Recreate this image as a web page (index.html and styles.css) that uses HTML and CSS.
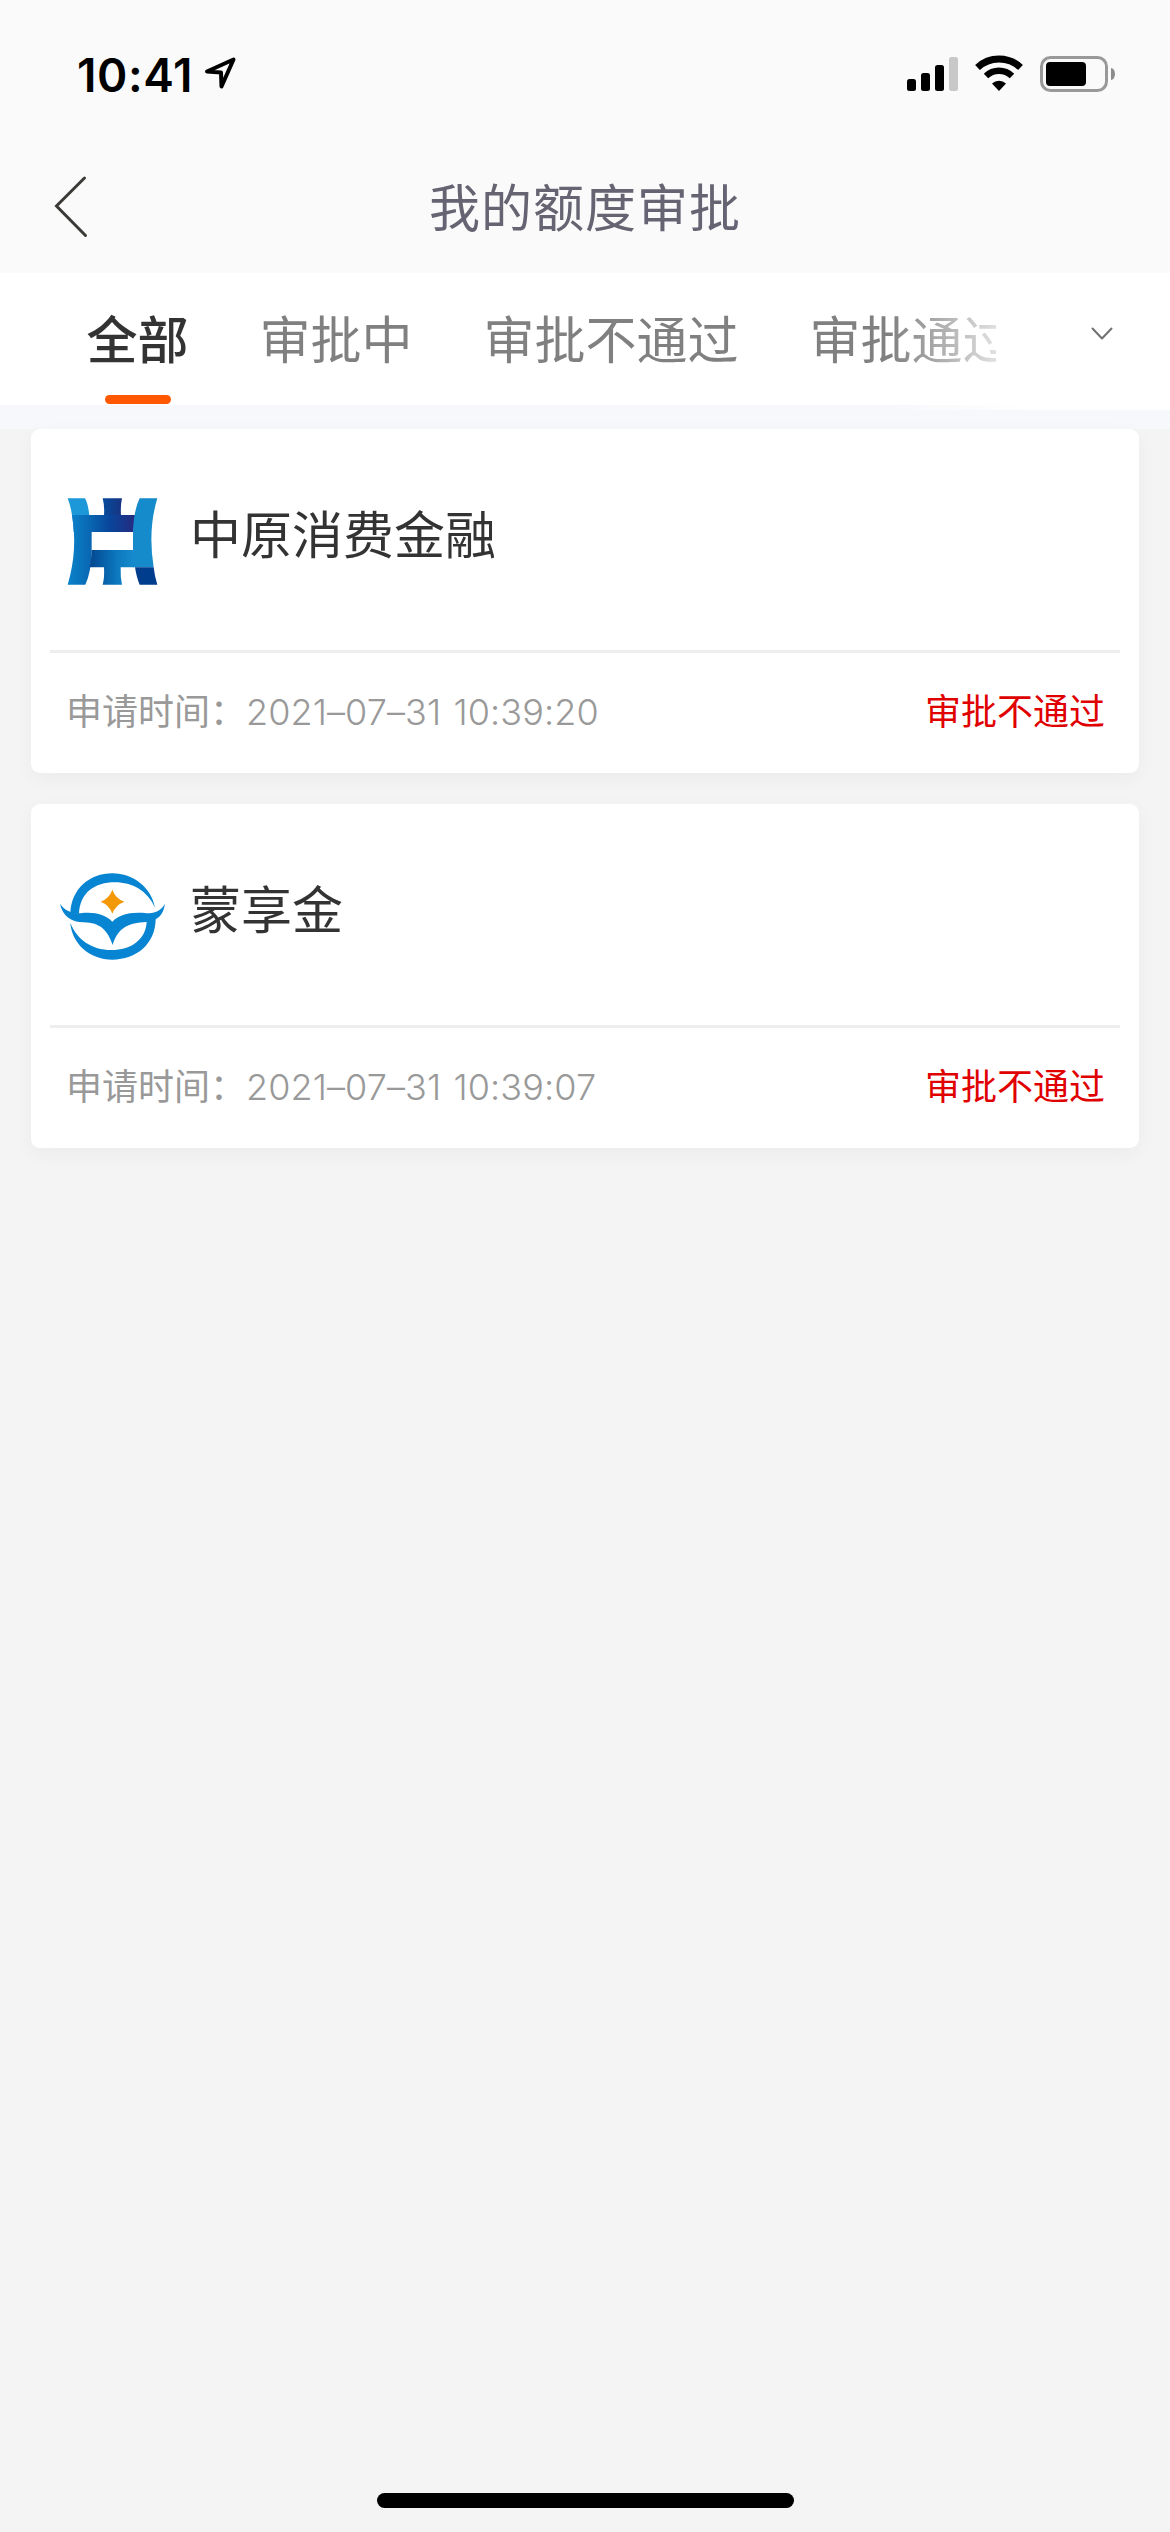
FILE: index.html
```html
<!DOCTYPE html>
<html lang="zh-CN">
<head>
  <meta charset="UTF-8" />
  <meta name="viewport" content="width=device-width, initial-scale=1.0"/>
  <title>我的额度审批</title>
  <link rel="stylesheet" href="styles.css">
</head>
<body>
  <header class="header">
    <div class="status-bar">
      <span class="time">10:41</span>
      <svg class="location" width="34" height="36" viewBox="0 0 34 36">
        <path d="M4 16.5 L30.5 4.500 L18.500 31.500 L18 17.500 Z" fill="none" stroke="#000" stroke-width="4" stroke-linejoin="round"/>
      </svg>
      <svg class="signals" width="210" height="40" viewBox="0 0 210 40">
        <rect x="7" y="25" width="9" height="12" rx="2.500"/>
        <rect x="21" y="19" width="9" height="18" rx="2.500"/>
        <rect x="35" y="11" width="9" height="26" rx="2.500"/>
        <rect x="49" y="3" width="9" height="34" rx="2.500" fill="#c8c8c8"/>
        <path d="M77.500 13.500 A31.500 31.500 0 0 1 120.500 13.500" fill="none" stroke="#000" stroke-width="7"/>
        <path d="M86 22 A19 19 0 0 1 112 22" fill="none" stroke="#000" stroke-width="6.500"/>
        <path d="M92 29.500 A10.500 10.500 0 0 1 106 29.500 L99 37 Z"/>
        <rect x="141.500" y="3.500" width="65" height="33" rx="9" fill="none" stroke="#999" stroke-width="3"/>
        <rect x="146" y="8" width="40" height="24" rx="4"/>
      </svg>
      <span class="battery-cap"></span>
    </div>
    <div class="nav-bar">
      <svg class="back" width="36" height="64" viewBox="0 0 36 64">
        <path d="M32.500 3 L4.500 31 L33.500 60.500" fill="none" stroke="#3c3a36" stroke-width="3" stroke-linecap="round"/>
      </svg>
      <h1 class="title">我的额度审批</h1>
    </div>
  </header>

  <nav class="tabs">
    <div class="tab-list">
      <a class="tab active">全部</a>
      <a class="tab">审批中</a>
      <a class="tab">审批不通过</a>
      <a class="tab">审批通过</a>
    </div>
    <div class="tab-more">
      <svg width="24" height="16" viewBox="0 0 24 16">
        <path d="M2.500 2.500 L12 12.500 L21.500 2.500" fill="none" stroke="#707070" stroke-width="2" stroke-linecap="round" stroke-linejoin="round"/>
      </svg>
    </div>
  </nav>

  <main class="list">
    <section class="card">
      <div class="card-head">
        <svg class="logo" viewBox="0 0 360 360">
          <defs>
            <linearGradient id="left" x1="0" x2="1"><stop offset="0" stop-color="#0b83cb"/><stop offset="1" stop-color="#0965b1"/></linearGradient>
            <linearGradient id="top" x1="0" x2="1"><stop offset="0" stop-color="#0c7fc8"/><stop offset=".3" stop-color="#0965b1"/><stop offset=".6" stop-color="#08459a"/><stop offset="1" stop-color="#252b80"/></linearGradient>
            <linearGradient id="stem" x1="0" x2="1"><stop offset="0" stop-color="#064c9c"/><stop offset="1" stop-color="#173382"/></linearGradient>
            <linearGradient id="low" x1="0" x2="1"><stop offset="0" stop-color="#034690"/><stop offset=".6" stop-color="#0c77bd"/><stop offset="1" stop-color="#168bcc"/></linearGradient>
          </defs>
          <path d="M53 55 H105 Q114 70 118 106 H66 Q62 78 53 55Z" fill="#1c98d8"/>
          <path d="M66 105 H125 V212 Q124 275 106 314 H53 Q84 210 66 105Z" fill="url(#left)"/>
          <path d="M158 55 H216 Q211 78 213 106 H162 Q164 78 158 55Z" fill="url(#stem)"/>
          <path d="M66 105 H256 L250 156 H71 Q70 130 66 105Z" fill="url(#top)"/>
          <path d="M125 210 H252 V262 H212 Q211 292 216 314 H158 Q164 292 162 262 H119 Q124 240 125 210Z" fill="url(#low)"/>
          <path d="M269 55 H322 Q293 150 311 262 H249 V156 Q251 92 269 55Z" fill="#168bcc"/>
          <path d="M255 262 H311 Q314 290 322 314 H269 Q260 294 255 262Z" fill="#003d8d"/>
        </svg>
        <h2 class="name">中原消费金融</h2>
      </div>
      <div class="card-foot">
        <span class="label">申请时间：<span class="date">2021–07–31 10:39:20</span></span>
        <span class="status">审批不通过</span>
      </div>
    </section>

    <section class="card">
      <div class="card-head">
        <svg class="logo" viewBox="0 0 360 360">
          <g transform="translate(0 15)" fill="#0785d2">
            <path d="M61 161 C63 86 120 40 187 40 C250 40 304 83 315 143 C292 92 247 67 195 67 C134 67 90 98 87 161Z"/>
            <path d="M30 131 C43 151 63 160 91 160 C133 155 165 163 187 185 C209 163 242 155 290 160 C318 160 334 150 345 131 C341 155 334 168 317 178 C316 252 259 299 187 299 C119 299 65 250 61 188 C80 238 125 270 184 270 C242 270 287 240 290 186 C233 188 203 205 188 255 C173 211 151 188 101 187 C65 186 38 169 30 131Z"/>
            <path d="M187 89 Q196 115 223 125 Q196 135 187 161 Q178 135 152 125 Q178 115 187 89Z" fill="#f39806"/>
          </g>
        </svg>
        <h2 class="name">蒙享金</h2>
      </div>
      <div class="card-foot">
        <span class="label">申请时间：<span class="date">2021–07–31 10:39:07</span></span>
        <span class="status">审批不通过</span>
      </div>
    </section>
  </main>

  <div class="home-indicator"></div>
</body>
</html>
```

FILE: styles.css
```css
* {
  box-sizing: border-box;
}
body {
  margin: 0;
  min-height: 2532px;
  display: flex;
  flex-direction: column;
  background: #f4f4f4;
  font-family: "Noto Sans CJK SC", sans-serif;
  color: #333;
}
h1, h2 {
  margin: 0;
  font-weight: 400;
}
.header {
  height: 273px;
  background: #fafafa;
}
.status-bar {
  height: 141px;
  padding: 54px 55px 0 77px;
  display: flex;
  align-items: flex-start;
}
.time {
  width: 126px;
  font-family: Inter, sans-serif;
  font-size: 46px;
  font-weight: 600;
  line-height: 42px;
  letter-spacing: 0.6px;
  color: #000;
  white-space: nowrap;
}
.location {
  margin-top: 1px;
}
.signals {
  margin-left: auto;
}
.battery-cap {
  width: 4px;
  height: 12px;
  margin: 14px 0 0 1px;
  border-radius: 0 4px 4px 0 / 0 6px 6px 0;
  background: #8c8c8c;
}
.nav-bar {
  height: 132px;
  display: grid;
  grid-template-columns: 120px 1fr 120px;
  align-items: center;
}
.back {
  margin-left: 52px;
}
.title {
  padding-bottom: 4px;
  font-size: 51px;
  line-height: 72px;
  letter-spacing: 1px;
  text-align: center;
  color: #666472;
}
.tabs {
  position: relative;
  height: 132px;
  background: #fff;
}
.tab-list {
  width: 996px;
  height: 132px;
  padding-left: 51px;
  display: flex;
  overflow: hidden;
}
.tab {
  flex: none;
  padding: 0 35.5px;
  display: flex;
  flex-direction: column;
  align-items: center;
  font-size: 51px;
  line-height: 128px;
  color: #808080;
}
.tab.active {
  font-weight: 500;
  color: #333;
}
.tab.active::after {
  content: "";
  width: 66px;
  height: 9px;
  margin-top: -6px;
  border-radius: 5px;
  background: #ff5800;
}
/* fades out the last tab */
.tab-more {
  position: absolute;
  top: 0;
  right: 0;
  width: 280px;
  height: 137px;
  padding: 53px 56px 0 0;
  text-align: right;
  line-height: 0;
  background: linear-gradient(to right, rgba(255,255,255,0), #fff 140px);
}
.list {
  padding: 24px 31px 0;
  display: flex;
  flex-direction: column;
  gap: 31px;
  background: linear-gradient(#f6f8fb 24px, #f4f4f4 24px);
}
.card {
  height: 344px;
  padding: 0 19px;
  border-radius: 9px;
  background: #fff;
  box-shadow: 0 6px 20px rgba(0,0,0,0.04);
}
.card-head {
  height: 224px;
  display: flex;
  gap: 20px;
  border-bottom: 3px solid #eee;
}
.logo {
  width: 120px;
  height: 120px;
  margin-top: 51px;
}
.name {
  margin-top: 67px;
  font-size: 51px;
  line-height: 72px;
}
.card-foot {
  height: 116px;
  padding: 0 15px 4px 16px;
  display: flex;
  justify-content: space-between;
  align-items: center;
  font-size: 36px;
}
.label {
  color: #999;
}
.date {
  font-family: Inter, sans-serif;
  font-weight: 350;
  letter-spacing: 0.1px;
  word-spacing: 2px;
}
.status {
  color: #e00000;
}
.home-indicator {
  width: 417px;
  height: 15px;
  margin: auto auto 24px;
  border-radius: 8px;
  background: #000;
}
```
